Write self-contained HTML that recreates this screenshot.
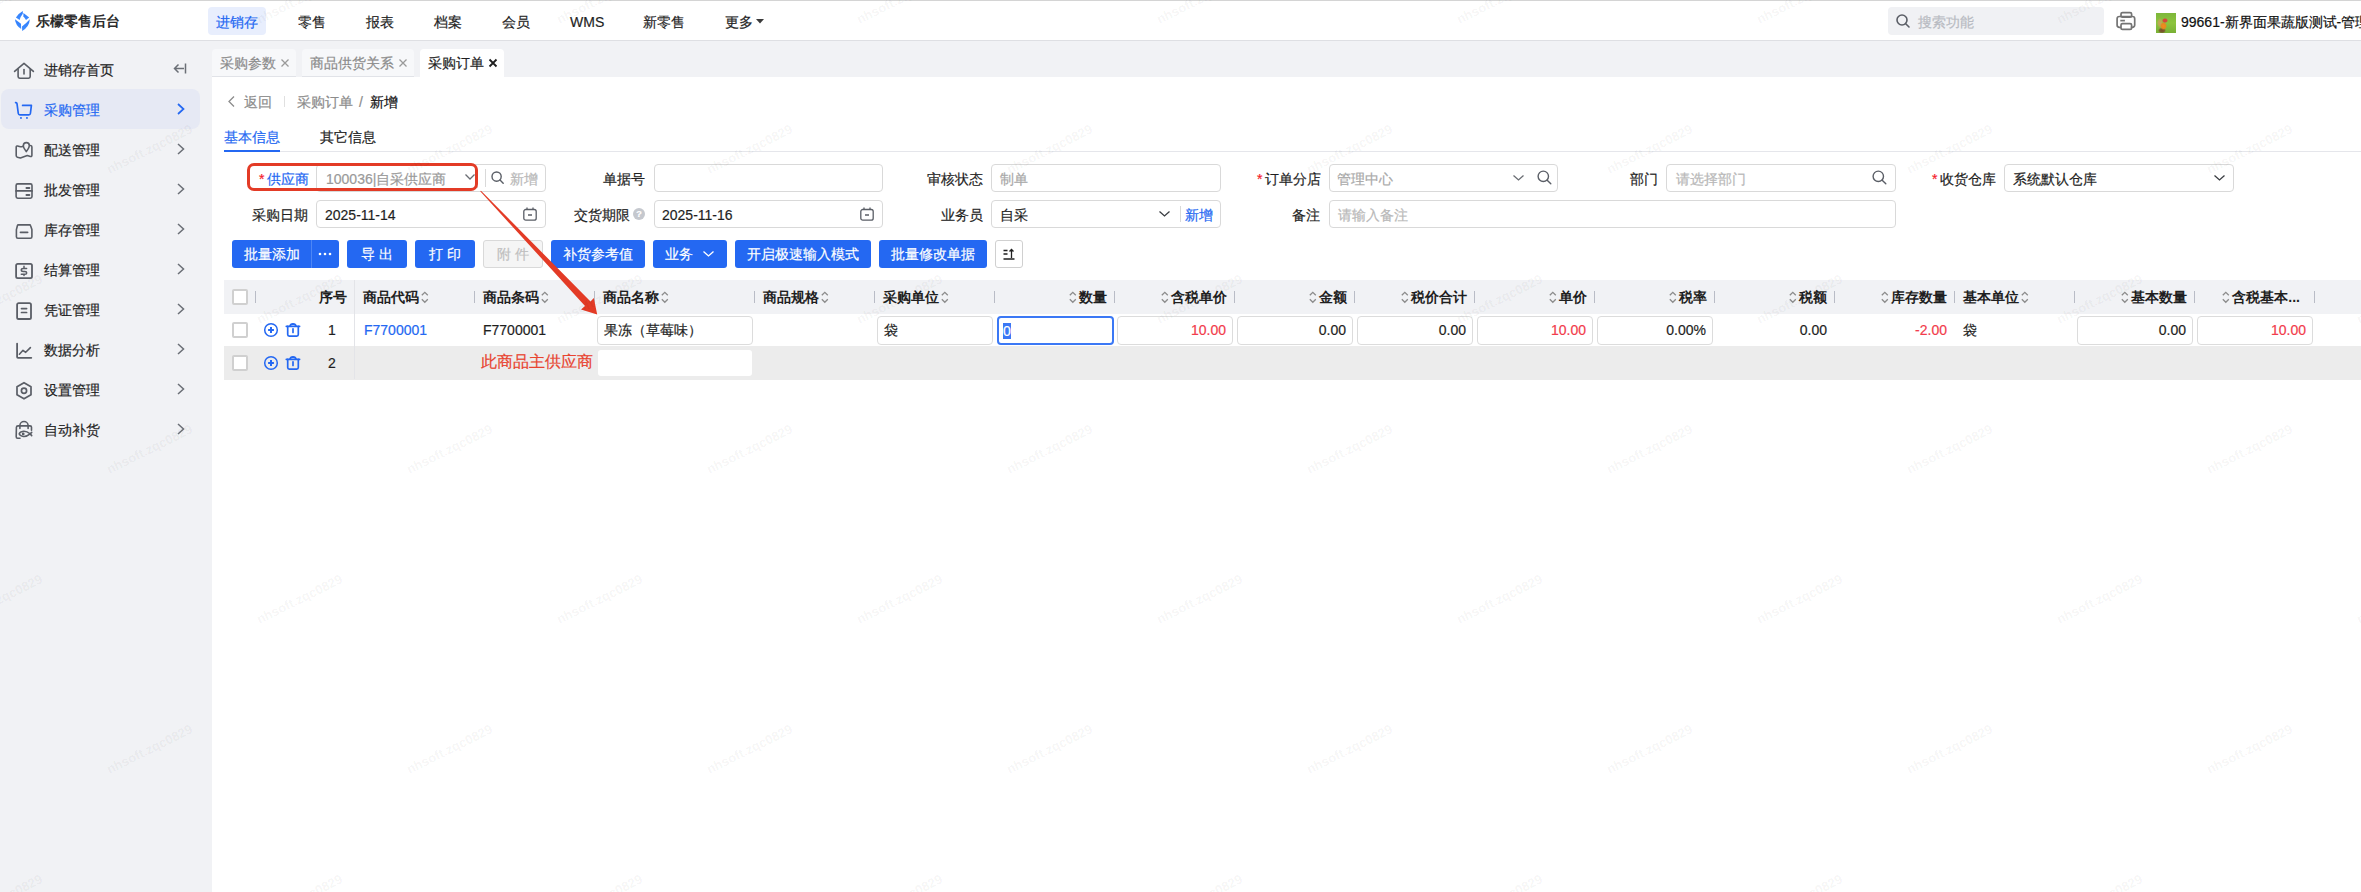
<!DOCTYPE html>
<html><head><meta charset="utf-8">
<style>
*{box-sizing:border-box;margin:0;padding:0}
html,body{width:2361px;height:892px;overflow:hidden;background:#fff}
body{position:relative;font-family:"Liberation Sans",sans-serif;font-size:14px;color:#1f1f1f;-webkit-text-stroke-width:0.2px}
.a{position:absolute}
.t{position:absolute;white-space:nowrap;line-height:20px;height:20px}
svg{position:absolute;overflow:visible}
#topline{left:0;top:0;width:2361px;height:1px;background:#d4d4d4}
#top{left:0;top:1px;width:2361px;height:39px;background:#fff}
#topb{left:0;top:40px;width:2361px;height:1px;background:#dedfe3}
#side{left:0;top:41px;width:212px;height:851px;background:#f1f2f5}
#tabbar{left:212px;top:41px;width:2149px;height:36px;background:#f1f2f5}
.nav{color:#1f1f1f;top:12px}
.sideitem{left:44px;color:#1f1f1f}
.ico{stroke:#5a5e66;fill:none;stroke-width:1.6;stroke-linecap:round;stroke-linejoin:round}
.chev{stroke:#6b6f76;fill:none;stroke-width:1.5}
.tab{top:49px;height:28px;background:#f7f8fa;border-radius:4px 4px 0 0;border-bottom:1px solid #e1e3e8}
.tabt{top:53px;color:#8c8c8c}
.inp{position:absolute;height:28px;border:1px solid #d9d9d9;border-radius:4px;background:#fff}
.lbl{top:169px}
.btn{position:absolute;top:240px;height:28px;background:#2468f2;border-radius:3px;color:#fff;line-height:28px;text-align:center}
.th{top:287px;font-weight:bold;color:#1f1f1f}
.sep{position:absolute;width:1px;height:12px;background:#b9bcc6}
.cb{position:absolute;width:16px;height:16px;border:2px solid #d0d0d0;border-radius:2px;background:#fff}
.cin{position:absolute;height:29px;border:1px solid #dcdcdc;border-radius:4px;background:#fff}
.red{color:#f23c4c}
.r{text-align:right}
.hc{position:absolute;top:281px;height:34px;display:flex;align-items:center;font-weight:bold;-webkit-text-stroke-width:0;white-space:nowrap;color:#1f1f1f}
.hc.r{justify-content:flex-end}
.srt{display:inline-block;width:8px;height:12px;margin:0 2px;position:relative}
.srt svg{position:absolute;left:0;top:0}
.cin{line-height:26px;white-space:nowrap}
</style></head><body>
<div id="topline" class="a"></div>
<div id="top" class="a"></div>
<div id="topb" class="a"></div>
<div id="side" class="a"></div>
<div id="tabbar" class="a"></div>
<div class="a" style="left:212px;top:77px;width:2149px;height:815px;background:#fff"></div>

<!-- logo -->
<svg style="left:0;top:0" width="40" height="40" viewBox="0 0 40 40">
 <defs><linearGradient id="lg" x1="0" y1="0" x2="0" y2="1"><stop offset="0" stop-color="#2f7dfb"/><stop offset="1" stop-color="#3f8dff"/></linearGradient></defs>
 <path d="M22.8 10.9 Q18 13.6 15.9 17.6 L19.6 20 Q20.8 16.2 22.8 13.8Z" fill="url(#lg)"/>
 <path d="M23.4 13 L29.2 17.6 L26 20 L23.4 16.2Z" fill="url(#lg)"/>
 <path d="M15 19.2 L21 23.8 L21.2 29 Q15.5 25.5 15 19.2Z" fill="url(#lg)"/>
 <path d="M29.8 19.2 Q29.5 26.5 22.2 30.9 L22 26.5 Q26 23.5 29.8 19.2Z" fill="url(#lg)"/>
</svg>
<div class="t" style="left:36px;top:11px;font-weight:bold;color:#2b2b2b;font-size:14px;-webkit-text-stroke-width:0">乐檬零售后台</div>

<!-- top nav -->
<div class="a" style="left:208px;top:7px;width:58px;height:28px;background:#e8eefd;border-radius:4px"></div>
<div class="t nav" style="left:216px;color:#2468f2">进销存</div>
<div class="t nav" style="left:298px">零售</div>
<div class="t nav" style="left:366px">报表</div>
<div class="t nav" style="left:434px">档案</div>
<div class="t nav" style="left:502px">会员</div>
<div class="t nav" style="left:570px">WMS</div>
<div class="t nav" style="left:643px">新零售</div>
<div class="t nav" style="left:725px">更多</div>
<svg style="left:756px;top:19px" width="8" height="5"><path d="M0 0H8L4 4.5Z" fill="#3a3a3a"/></svg>

<!-- search -->
<div class="a" style="left:1888px;top:7px;width:216px;height:28px;background:#f0f1f4;border-radius:4px"></div>
<svg style="left:1896px;top:14px" width="14" height="14" viewBox="0 0 14 14"><circle cx="6" cy="6" r="5" fill="none" stroke="#5a5e66" stroke-width="1.6"/><path d="M9.7 9.7L13 13" stroke="#5a5e66" stroke-width="1.6" stroke-linecap="round"/></svg>
<div class="t" style="left:1918px;top:12px;color:#b8bbc2">搜索功能</div>
<svg style="left:2110px;top:5px" width="32" height="32" viewBox="2110 5 32 32"><g fill="none" stroke="#747474" stroke-width="1.7"><rect x="2121" y="12.6" width="10.6" height="4.6" rx="1.5"/><path d="M2121 27.3h-1.6a2.3 2.3 0 0 1-2.3-2.3v-6.2a2.3 2.3 0 0 1 2.3-2.3h13a2.3 2.3 0 0 1 2.3 2.3v6.2a2.3 2.3 0 0 1-2.3 2.3h-1.6"/><rect x="2121" y="23.6" width="10.6" height="5.8" rx="1.5"/><path d="M2120.3 20.6h4.6"/></g></svg>
<div class="a" style="left:2156px;top:13px;width:20px;height:20px;background:radial-gradient(ellipse 3px 2.5px at 9px 7.5px,#d8443a 0,#d8443a 60%,rgba(216,68,58,0) 100%),radial-gradient(ellipse 3.5px 4px at 7.5px 13px,#f0901c 0,#e8871f 60%,rgba(232,135,31,0) 100%),radial-gradient(ellipse 4px 3px at 6px 17.5px,#7a4a2a 0,rgba(122,74,42,0.8) 60%,rgba(122,74,42,0) 100%),radial-gradient(ellipse 3px 5px at 4px 10px,#c9a25a 0,rgba(201,162,90,0.7) 60%,rgba(201,162,90,0) 100%),linear-gradient(180deg,#7db73a,#8cc43e 50%,#79b035)"></div>
<div class="t" style="left:2181px;top:12px;color:#111">99661-新界面果蔬版测试-管理员</div>

<!-- sidebar -->
<div class="a" style="left:1px;top:89px;width:199px;height:40px;background:#e6e9f4;border-radius:8px"></div>
<div class="t sideitem" style="top:60px">进销存首页</div>
<div class="t sideitem" style="top:100px;color:#2468f2">采购管理</div>
<div class="t sideitem" style="top:140px">配送管理</div>
<div class="t sideitem" style="top:180px">批发管理</div>
<div class="t sideitem" style="top:220px">库存管理</div>
<div class="t sideitem" style="top:260px">结算管理</div>
<div class="t sideitem" style="top:300px">凭证管理</div>
<div class="t sideitem" style="top:340px">数据分析</div>
<div class="t sideitem" style="top:380px">设置管理</div>
<div class="t sideitem" style="top:420px">自动补货</div>
<!-- sidebar icons -->
<svg style="left:10px;top:55px" width="30" height="30" viewBox="0 0 30 30" class="ico"><path d="M4.6 16.4L14 8.4l9.4 8"/><path d="M8.1 14.2V21.6Q8.1 23.2 9.7 23.2H18.6Q20.2 23.2 20.2 21.6V14.2"/><path d="M14 14.6V19"/></svg>
<svg style="left:173px;top:63px" width="14" height="11" viewBox="0 0 14 11" class="chev"><path d="M12.5 0.5V10.5M11 5.5H1.5M5.5 1.5L1.5 5.5L5.5 9.5"/></svg>
<svg style="left:10px;top:95px" width="30" height="30" viewBox="0 0 30 30" class="ico"><path d="M5.6 7.6Q6.8 7.4 7 8.6L8.3 18.5Q8.5 19.9 9.9 19.9H18.9Q20.2 19.9 20.4 18.5L21.4 10.4H12.6" stroke="#2468f2" stroke-width="1.7"/><rect x="10.1" y="22.1" width="1.7" height="1.7" fill="#2468f2" stroke="none"/><rect x="16.1" y="22.1" width="1.7" height="1.7" fill="#2468f2" stroke="none"/></svg>
<svg style="left:10px;top:135px" width="30" height="30" viewBox="0 0 30 30" class="ico"><path d="M13 11.2Q11.6 11.9 10.4 11.8L7.6 11Q6.2 10.7 6.2 12.1V20.6Q6.2 21.8 7.4 22.2L10.4 23L17.3 20.5L20.4 21.4Q21.9 21.8 21.9 20.3V12.1Q21.9 10.8 20.6 10.5"/><path d="M16.3 16.6L14.3 13.6Q13.3 12.1 13.4 10.6A2.95 2.95 0 0 1 19.3 10.6Q19.3 12.1 18.3 13.6Z"/></svg>
<svg style="left:10px;top:175px" width="30" height="30" viewBox="0 0 30 30" class="ico"><rect x="6.1" y="8.9" width="15.9" height="14.3" rx="1.6"/><path d="M6.1 15.9H22M16.4 13H19.4M16.4 20H19.4" stroke-width="1.8"/></svg>
<svg style="left:10px;top:215px" width="30" height="30" viewBox="0 0 30 30" class="ico"><path d="M8.4 9.9H19.6Q20.4 9.9 20.6 10.7L21.9 14.6V21.7Q21.9 23.2 20.4 23.2H7.9Q6.4 23.2 6.4 21.7V14.6L7.4 10.7Q7.6 9.9 8.4 9.9Z"/><path d="M10.5 17.3H17.6" stroke-width="1.8"/></svg>
<svg style="left:10px;top:255px" width="30" height="30" viewBox="0 0 30 30" class="ico"><rect x="6.1" y="8.9" width="15.9" height="14.3" rx="1.6" stroke-width="1.8"/><path d="M16.6 13.4H13.2Q11.3 13.4 11.3 14.9Q11.3 16.4 13.2 16.4H14.9Q16.7 16.4 16.7 17.9Q16.7 19.3 14.9 19.3H11.3M14 11.3V13.4M14 19.3V20.6" stroke-width="1.5"/></svg>
<svg style="left:10px;top:295px" width="30" height="30" viewBox="0 0 30 30" class="ico"><rect x="7.1" y="8.1" width="13.9" height="15.9" rx="1.6" stroke-width="1.8"/><path d="M11.5 13.6H16.6M11.5 17.5H16.6" stroke-width="1.7"/></svg>
<svg style="left:10px;top:335px" width="30" height="30" viewBox="0 0 30 30" class="ico"><path d="M7.1 8.6V22Q7.1 22.8 7.9 22.8H21.3" stroke-width="1.8"/><path d="M9.4 19.2L13 15.3L15.7 17.3L20.4 12.6"/></svg>
<svg style="left:10px;top:375px" width="30" height="30" viewBox="0 0 30 30" class="ico"><path d="M14 7.7L21 11.7V19.8L14 23.8L7 19.8V11.7Z" stroke-width="1.7"/><circle cx="14" cy="15.8" r="2.6" stroke-width="1.7"/></svg>
<svg style="left:10px;top:415px" width="30" height="30" viewBox="0 0 30 30" class="ico"><path d="M9.9 13.5V10.6a4.1 4.1 0 0 1 8.2 0V13.5"/><path d="M10 23.2H7.6Q6.2 23.2 6.2 21.8L6.4 12.3Q6.5 10.9 8 10.9H20Q21.5 10.9 21.5 12.3V15.2"/><path d="M20.2 18.9Q16.5 16 13.5 16.3Q9.8 16.8 9.2 18.9Q9.8 21 13.5 21.5Q16.5 21.8 20.2 18.9ZM20.2 18.9L21.7 17.4M20.2 18.9L21.7 20.6"/><circle cx="13.2" cy="18.9" r="0.6" fill="#5a5e66"/></svg>
<!-- chevrons -->
<svg style="left:177px;top:103px" width="8" height="12" viewBox="0 0 8 12" class="chev"><path d="M1 1l5.5 5L1 11" stroke="#2468f2" stroke-width="1.7"/></svg>
<svg style="left:177px;top:143px" width="8" height="12" viewBox="0 0 8 12" class="chev"><path d="M1 1l5.5 5L1 11"/></svg>
<svg style="left:177px;top:183px" width="8" height="12" viewBox="0 0 8 12" class="chev"><path d="M1 1l5.5 5L1 11"/></svg>
<svg style="left:177px;top:223px" width="8" height="12" viewBox="0 0 8 12" class="chev"><path d="M1 1l5.5 5L1 11"/></svg>
<svg style="left:177px;top:263px" width="8" height="12" viewBox="0 0 8 12" class="chev"><path d="M1 1l5.5 5L1 11"/></svg>
<svg style="left:177px;top:303px" width="8" height="12" viewBox="0 0 8 12" class="chev"><path d="M1 1l5.5 5L1 11"/></svg>
<svg style="left:177px;top:343px" width="8" height="12" viewBox="0 0 8 12" class="chev"><path d="M1 1l5.5 5L1 11"/></svg>
<svg style="left:177px;top:383px" width="8" height="12" viewBox="0 0 8 12" class="chev"><path d="M1 1l5.5 5L1 11"/></svg>
<svg style="left:177px;top:423px" width="8" height="12" viewBox="0 0 8 12" class="chev"><path d="M1 1l5.5 5L1 11"/></svg>

<!-- tabs -->
<div class="a tab" style="left:212px;width:84px"></div>
<div class="a tab" style="left:302px;width:112px"></div>
<div class="a" style="left:420px;top:49px;width:84px;height:28px;background:#fff;border-radius:4px 4px 0 0"></div>
<div class="t tabt" style="left:220px">采购参数</div>
<div class="t tabt" style="left:310px">商品供货关系</div>
<div class="t" style="left:428px;top:53px;color:#1f1f1f">采购订单</div>
<svg style="left:281px;top:59px" width="8" height="8" viewBox="0 0 8 8"><path d="M0.5 0.5l7 7M7.5 0.5l-7 7" stroke="#9a9a9a" stroke-width="1.3"/></svg>
<svg style="left:399px;top:59px" width="8" height="8" viewBox="0 0 8 8"><path d="M0.5 0.5l7 7M7.5 0.5l-7 7" stroke="#9a9a9a" stroke-width="1.3"/></svg>
<svg style="left:489px;top:59px" width="8" height="8" viewBox="0 0 8 8"><path d="M0.5 0.5l7 7M7.5 0.5l-7 7" stroke="#1f1f1f" stroke-width="1.8"/></svg>

<!-- breadcrumb -->
<svg style="left:228px;top:96px" width="7" height="11" viewBox="0 0 7 11"><path d="M6 0.5L1 5.5l5 5" fill="none" stroke="#8c8c8c" stroke-width="1.3"/></svg>
<div class="t" style="left:244px;top:92px;color:#8c8c8c">返回</div>
<div class="a" style="left:284px;top:96px;width:1px;height:11px;background:#e0e0e0"></div>
<div class="t" style="left:297px;top:92px;color:#8c8c8c">采购订单</div>
<div class="t" style="left:359px;top:92px;color:#8c8c8c">/</div>
<div class="t" style="left:370px;top:92px;color:#111">新增</div>

<!-- sub tabs -->
<div class="t" style="left:224px;top:127px;color:#2468f2">基本信息</div>
<div class="t" style="left:320px;top:127px;color:#1f1f1f">其它信息</div>
<div class="a" style="left:224px;top:151px;width:2137px;height:1px;background:#e5e6eb"></div>
<div class="a" style="left:224px;top:150px;width:56px;height:2px;background:#2468f2"></div>

<!-- form row 1 -->
<div class="inp" style="left:316px;top:164px;width:230px"></div>
<div class="a" style="left:477px;top:168px;width:1px;height:20px;background:#e0e0e0"></div>
<div class="t lbl" style="left:259px;color:#f5222d">*</div>
<div class="t lbl" style="left:267px;color:#2468f2">供应商</div>
<div class="a" style="left:316px;top:168px;width:1px;height:20px;background:#d9d9d9"></div>
<div class="t lbl" style="left:326px;color:#9a9a9a">100036|自采供应商</div>
<svg style="left:465px;top:174px" width="10" height="6" viewBox="0 0 10 6"><path d="M0.5 0.5L5 5l4.5-4.5" fill="none" stroke="#6a6d73" stroke-width="1.3"/></svg>
<div class="a" style="left:485px;top:169px;width:1px;height:18px;background:#d9d9d9"></div>
<svg style="left:491px;top:171px" width="13" height="13" viewBox="0 0 13 13"><circle cx="5.6" cy="5.6" r="4.6" fill="none" stroke="#5a5e66" stroke-width="1.4"/><path d="M9 9l3.2 3.2" stroke="#5a5e66" stroke-width="1.4" stroke-linecap="round"/></svg>
<div class="t lbl" style="left:510px;color:#b8b8b8">新增</div>

<div class="t lbl" style="left:603px">单据号</div>
<div class="inp" style="left:654px;top:164px;width:229px"></div>
<div class="t lbl" style="left:927px">审核状态</div>
<div class="inp" style="left:991px;top:164px;width:230px"></div>
<div class="t lbl" style="left:1000px;color:#a8a8a8">制单</div>
<div class="t lbl" style="left:1257px;color:#f5222d">*</div>
<div class="t lbl" style="left:1265px">订单分店</div>
<div class="inp" style="left:1329px;top:164px;width:229px"></div>
<div class="t lbl" style="left:1337px;color:#a8a8a8">管理中心</div>
<svg style="left:1513px;top:175px" width="11" height="6" viewBox="0 0 11 6"><path d="M0.5 0.5L5.5 5l5-4.5" fill="none" stroke="#6a6d73" stroke-width="1.3"/></svg>
<svg style="left:1537px;top:170px" width="15" height="15" viewBox="0 0 15 15"><circle cx="6.3" cy="6.3" r="5.2" fill="none" stroke="#5a5e66" stroke-width="1.4"/><path d="M10.2 10.2l3.6 3.6" stroke="#5a5e66" stroke-width="1.4" stroke-linecap="round"/></svg>
<div class="t lbl" style="left:1630px">部门</div>
<div class="inp" style="left:1666px;top:164px;width:230px"></div>
<div class="t lbl" style="left:1676px;color:#b8b8b8">请选择部门</div>
<svg style="left:1872px;top:170px" width="15" height="15" viewBox="0 0 15 15"><circle cx="6.3" cy="6.3" r="5.2" fill="none" stroke="#5a5e66" stroke-width="1.4"/><path d="M10.2 10.2l3.6 3.6" stroke="#5a5e66" stroke-width="1.4" stroke-linecap="round"/></svg>
<div class="t lbl" style="left:1932px;color:#f5222d">*</div>
<div class="t lbl" style="left:1940px">收货仓库</div>
<div class="inp" style="left:2004px;top:164px;width:230px"></div>
<div class="t lbl" style="left:2013px">系统默认仓库</div>
<svg style="left:2214px;top:175px" width="11" height="6" viewBox="0 0 11 6"><path d="M0.5 0.5L5.5 5l5-4.5" fill="none" stroke="#3a3d42" stroke-width="1.3"/></svg>

<!-- form row 2 -->
<div class="t" style="left:252px;top:205px">采购日期</div>
<div class="inp" style="left:316px;top:200px;width:230px"></div>
<div class="t" style="left:325px;top:205px">2025-11-14</div>
<svg style="left:523px;top:207px" width="14" height="14" viewBox="0 0 14 14"><rect x="0.8" y="2.5" width="12.4" height="10.7" rx="2" fill="none" stroke="#5a5e66" stroke-width="1.3"/><path d="M4 0.5v2.5M10 0.5v2.5M5 8h4" stroke="#5a5e66" stroke-width="1.3"/></svg>
<div class="t" style="left:574px;top:205px">交货期限</div>
<div class="a" style="left:633px;top:208px;width:12px;height:12px;border-radius:6px;background:#c5c8ce;color:#fff;font-size:9px;line-height:12px;text-align:center;font-weight:bold">?</div>
<div class="inp" style="left:654px;top:200px;width:229px"></div>
<div class="t" style="left:662px;top:205px">2025-11-16</div>
<svg style="left:860px;top:207px" width="14" height="14" viewBox="0 0 14 14"><rect x="0.8" y="2.5" width="12.4" height="10.7" rx="2" fill="none" stroke="#5a5e66" stroke-width="1.3"/><path d="M4 0.5v2.5M10 0.5v2.5M5 8h4" stroke="#5a5e66" stroke-width="1.3"/></svg>
<div class="t" style="left:941px;top:205px">业务员</div>
<div class="inp" style="left:991px;top:200px;width:230px"></div>
<div class="t" style="left:1000px;top:205px">自采</div>
<svg style="left:1159px;top:211px" width="11" height="6" viewBox="0 0 11 6"><path d="M0.5 0.5L5.5 5l5-4.5" fill="none" stroke="#3a3d42" stroke-width="1.3"/></svg>
<div class="a" style="left:1180px;top:206px;width:1px;height:16px;background:#d9d9d9"></div>
<div class="t" style="left:1185px;top:205px;color:#2468f2">新增</div>
<div class="t" style="left:1292px;top:205px">备注</div>
<div class="inp" style="left:1329px;top:200px;width:567px"></div>
<div class="t" style="left:1338px;top:205px;color:#b8b8b8">请输入备注</div>

<!-- buttons -->
<div class="btn" style="left:232px;width:79px;border-radius:3px 0 0 3px">批量添加</div>
<div class="btn" style="left:311px;width:28px;border-left:1px solid #4d86f5;border-radius:0 3px 3px 0"></div><svg style="left:318px;top:252px" width="14" height="4" viewBox="0 0 14 4"><circle cx="2" cy="2" r="1.3" fill="#fff"/><circle cx="7" cy="2" r="1.3" fill="#fff"/><circle cx="12" cy="2" r="1.3" fill="#fff"/></svg>
<div class="btn" style="left:347px;width:60px;letter-spacing:4px;text-indent:4px">导出</div>
<div class="btn" style="left:415px;width:60px;letter-spacing:4px;text-indent:4px">打印</div>
<div class="btn" style="left:483px;width:60px;letter-spacing:4px;text-indent:4px;background:#f5f5f5;border:1px solid #d9d9d9;color:#c0c0c0;line-height:26px">附件</div>
<div class="btn" style="left:551px;width:94px">补货参考值</div>
<div class="btn" style="left:653px;width:74px;text-align:left;padding-left:12px">业务</div>
<svg style="left:703px;top:251px" width="11" height="6" viewBox="0 0 11 6"><path d="M0.5 0.5L5.5 5l5-4.5" fill="none" stroke="#fff" stroke-width="1.3"/></svg>
<div class="btn" style="left:735px;width:136px">开启极速输入模式</div>
<div class="btn" style="left:879px;width:108px">批量修改单据</div>
<div class="a" style="left:995px;top:240px;width:28px;height:28px;border:1px solid #d0d0d0;border-radius:3px;background:#fff"></div>
<svg style="left:1003px;top:248px" width="12" height="12" viewBox="0 0 12 12"><path d="M0.5 2.5h4M0.5 6h4M0.5 11h11M8.5 10V1.5M6.5 3.5l2-2 2 2" fill="none" stroke="#1f1f1f" stroke-width="1.3"/></svg>

<!-- table -->
<div class="a" style="left:224px;top:280px;width:2137px;height:34px;background:#f1f2f5"></div>
<div class="a" style="left:224px;top:314px;width:2137px;height:32px;background:#fff"></div>
<div class="a" style="left:224px;top:346px;width:2137px;height:34px;background:#ececec"></div>
<div class="a" style="left:354px;top:280px;width:1px;height:99px;background:#e3e4e8"></div>
<!-- table header -->
<div class="cb" style="left:232px;top:289px"></div>
<div class="sep" style="left:255px;top:291px"></div>
<div class="hc r" style="left:300px;width:47px">序号</div>
<div class="sep" style="left:474px;top:291px"></div>
<div class="hc" style="left:355px;width:119px;justify-content:flex-start;padding-left:8px">商品代码<i class="srt"><svg width="8" height="12" viewBox="0 0 8 12"><path d="M0.8 3.3L3.8 0.3L6.8 3.3M0.8 7.3L3.8 10.3L6.8 7.3" fill="none" stroke="#8c8c8c" stroke-width="1.3"/></svg></i></div>
<div class="sep" style="left:594px;top:291px"></div>
<div class="hc" style="left:475px;width:119px;justify-content:flex-start;padding-left:8px">商品条码<i class="srt"><svg width="8" height="12" viewBox="0 0 8 12"><path d="M0.8 3.3L3.8 0.3L6.8 3.3M0.8 7.3L3.8 10.3L6.8 7.3" fill="none" stroke="#8c8c8c" stroke-width="1.3"/></svg></i></div>
<div class="sep" style="left:754px;top:291px"></div>
<div class="hc" style="left:595px;width:159px;justify-content:flex-start;padding-left:8px">商品名称<i class="srt"><svg width="8" height="12" viewBox="0 0 8 12"><path d="M0.8 3.3L3.8 0.3L6.8 3.3M0.8 7.3L3.8 10.3L6.8 7.3" fill="none" stroke="#8c8c8c" stroke-width="1.3"/></svg></i></div>
<div class="sep" style="left:874px;top:291px"></div>
<div class="hc" style="left:755px;width:119px;justify-content:flex-start;padding-left:8px">商品规格<i class="srt"><svg width="8" height="12" viewBox="0 0 8 12"><path d="M0.8 3.3L3.8 0.3L6.8 3.3M0.8 7.3L3.8 10.3L6.8 7.3" fill="none" stroke="#8c8c8c" stroke-width="1.3"/></svg></i></div>
<div class="sep" style="left:994px;top:291px"></div>
<div class="hc" style="left:875px;width:119px;justify-content:flex-start;padding-left:8px">采购单位<i class="srt"><svg width="8" height="12" viewBox="0 0 8 12"><path d="M0.8 3.3L3.8 0.3L6.8 3.3M0.8 7.3L3.8 10.3L6.8 7.3" fill="none" stroke="#8c8c8c" stroke-width="1.3"/></svg></i></div>
<div class="sep" style="left:1114px;top:291px"></div>
<div class="hc" style="left:995px;width:119px;justify-content:flex-end;padding-right:7px"><i class="srt"><svg width="8" height="12" viewBox="0 0 8 12"><path d="M0.8 3.3L3.8 0.3L6.8 3.3M0.8 7.3L3.8 10.3L6.8 7.3" fill="none" stroke="#8c8c8c" stroke-width="1.3"/></svg></i>数量</div>
<div class="sep" style="left:1234px;top:291px"></div>
<div class="hc" style="left:1115px;width:119px;justify-content:flex-end;padding-right:7px"><i class="srt"><svg width="8" height="12" viewBox="0 0 8 12"><path d="M0.8 3.3L3.8 0.3L6.8 3.3M0.8 7.3L3.8 10.3L6.8 7.3" fill="none" stroke="#8c8c8c" stroke-width="1.3"/></svg></i>含税单价</div>
<div class="sep" style="left:1354px;top:291px"></div>
<div class="hc" style="left:1235px;width:119px;justify-content:flex-end;padding-right:7px"><i class="srt"><svg width="8" height="12" viewBox="0 0 8 12"><path d="M0.8 3.3L3.8 0.3L6.8 3.3M0.8 7.3L3.8 10.3L6.8 7.3" fill="none" stroke="#8c8c8c" stroke-width="1.3"/></svg></i>金额</div>
<div class="sep" style="left:1474px;top:291px"></div>
<div class="hc" style="left:1355px;width:119px;justify-content:flex-end;padding-right:7px"><i class="srt"><svg width="8" height="12" viewBox="0 0 8 12"><path d="M0.8 3.3L3.8 0.3L6.8 3.3M0.8 7.3L3.8 10.3L6.8 7.3" fill="none" stroke="#8c8c8c" stroke-width="1.3"/></svg></i>税价合计</div>
<div class="sep" style="left:1594px;top:291px"></div>
<div class="hc" style="left:1475px;width:119px;justify-content:flex-end;padding-right:7px"><i class="srt"><svg width="8" height="12" viewBox="0 0 8 12"><path d="M0.8 3.3L3.8 0.3L6.8 3.3M0.8 7.3L3.8 10.3L6.8 7.3" fill="none" stroke="#8c8c8c" stroke-width="1.3"/></svg></i>单价</div>
<div class="sep" style="left:1714px;top:291px"></div>
<div class="hc" style="left:1595px;width:119px;justify-content:flex-end;padding-right:7px"><i class="srt"><svg width="8" height="12" viewBox="0 0 8 12"><path d="M0.8 3.3L3.8 0.3L6.8 3.3M0.8 7.3L3.8 10.3L6.8 7.3" fill="none" stroke="#8c8c8c" stroke-width="1.3"/></svg></i>税率</div>
<div class="sep" style="left:1834px;top:291px"></div>
<div class="hc" style="left:1715px;width:119px;justify-content:flex-end;padding-right:7px"><i class="srt"><svg width="8" height="12" viewBox="0 0 8 12"><path d="M0.8 3.3L3.8 0.3L6.8 3.3M0.8 7.3L3.8 10.3L6.8 7.3" fill="none" stroke="#8c8c8c" stroke-width="1.3"/></svg></i>税额</div>
<div class="sep" style="left:1954px;top:291px"></div>
<div class="hc" style="left:1835px;width:119px;justify-content:flex-end;padding-right:7px"><i class="srt"><svg width="8" height="12" viewBox="0 0 8 12"><path d="M0.8 3.3L3.8 0.3L6.8 3.3M0.8 7.3L3.8 10.3L6.8 7.3" fill="none" stroke="#8c8c8c" stroke-width="1.3"/></svg></i>库存数量</div>
<div class="sep" style="left:2074px;top:291px"></div>
<div class="hc" style="left:1955px;width:119px;justify-content:flex-start;padding-left:8px">基本单位<i class="srt"><svg width="8" height="12" viewBox="0 0 8 12"><path d="M0.8 3.3L3.8 0.3L6.8 3.3M0.8 7.3L3.8 10.3L6.8 7.3" fill="none" stroke="#8c8c8c" stroke-width="1.3"/></svg></i></div>
<div class="sep" style="left:2194px;top:291px"></div>
<div class="hc" style="left:2075px;width:119px;justify-content:flex-end;padding-right:7px"><i class="srt"><svg width="8" height="12" viewBox="0 0 8 12"><path d="M0.8 3.3L3.8 0.3L6.8 3.3M0.8 7.3L3.8 10.3L6.8 7.3" fill="none" stroke="#8c8c8c" stroke-width="1.3"/></svg></i>基本数量</div>
<div class="sep" style="left:2314px;top:291px"></div>
<div class="hc" style="left:2195px;width:119px;justify-content:flex-end;padding-right:14px"><i class="srt"><svg width="8" height="12" viewBox="0 0 8 12"><path d="M0.8 3.3L3.8 0.3L6.8 3.3M0.8 7.3L3.8 10.3L6.8 7.3" fill="none" stroke="#8c8c8c" stroke-width="1.3"/></svg></i>含税基本...</div>
<!-- row1 -->
<div class="cb" style="left:232px;top:322px"></div>
<div class="cb" style="left:232px;top:355px"></div>
<div class="t" style="left:328px;top:320px">1</div>
<div class="t" style="left:328px;top:353px">2</div>
<div class="t" style="left:364px;top:320px;color:#2468f2">F7700001</div>
<div class="t" style="left:483px;top:320px">F7700001</div>
<div class="t" style="left:481px;top:351px;color:#e8432f;font-size:16px;line-height:22px;height:22px">此商品主供应商</div>
<div class="cin " style="left:597px;top:316px;width:156px;padding-left:6px">果冻（草莓味）</div>
<div class="cin " style="left:877px;top:316px;width:116px;padding-left:6px">袋</div>
<div class="cin" style="left:997px;top:316px;width:117px;border:2px solid #3b78f5;padding-left:4px"><span style="background:#3b78f5;color:#fff;line-height:16px;display:inline-block;margin-top:4px">0</span></div>
<div class="cin red" style="left:1117px;top:316px;width:116px;padding-right:6px;text-align:right">10.00</div>
<div class="cin " style="left:1237px;top:316px;width:116px;padding-right:6px;text-align:right">0.00</div>
<div class="cin " style="left:1357px;top:316px;width:116px;padding-right:6px;text-align:right">0.00</div>
<div class="cin red" style="left:1477px;top:316px;width:116px;padding-right:6px;text-align:right">10.00</div>
<div class="cin " style="left:1597px;top:316px;width:116px;padding-right:6px;text-align:right">0.00%</div>
<div class="t r" style="left:1720px;top:320px;width:107px">0.00</div>
<div class="t r red" style="left:1840px;top:320px;width:107px">-2.00</div>
<div class="t" style="left:1963px;top:320px">袋</div>
<div class="cin " style="left:2077px;top:316px;width:116px;padding-right:6px;text-align:right">0.00</div>
<div class="cin red" style="left:2197px;top:316px;width:116px;padding-right:6px;text-align:right">10.00</div>
<div class="a" style="left:598px;top:350px;width:154px;height:26px;background:#fff;border-radius:3px"></div>
<svg style="left:262px;top:321px" width="18" height="18" viewBox="0 0 18 18"><circle cx="9" cy="9" r="6.3" fill="none" stroke="#2468f2" stroke-width="1.5"/><path d="M6.1 9H11.9M9 6.1V11.9" stroke="#2468f2" stroke-width="2"/></svg>
<svg style="left:284px;top:316px" width="18" height="24" viewBox="0 0 18 24"><g fill="none" stroke="#2468f2" stroke-width="1.7" stroke-linecap="round"><path d="M2.3 10.3H15.6"/><path d="M6 10Q6.4 8.1 9 7.9Q11.6 8.1 12 10"/><path d="M3.7 10.3V18.6Q3.7 20.1 5.2 20.1H12.8Q14.3 20.1 14.3 18.6V10.3"/><path d="M9 12.8V16.5"/></g></svg>
<svg style="left:262px;top:354px" width="18" height="18" viewBox="0 0 18 18"><circle cx="9" cy="9" r="6.3" fill="none" stroke="#2468f2" stroke-width="1.5"/><path d="M6.1 9H11.9M9 6.1V11.9" stroke="#2468f2" stroke-width="2"/></svg>
<svg style="left:284px;top:349px" width="18" height="24" viewBox="0 0 18 24"><g fill="none" stroke="#2468f2" stroke-width="1.7" stroke-linecap="round"><path d="M2.3 10.3H15.6"/><path d="M6 10Q6.4 8.1 9 7.9Q11.6 8.1 12 10"/><path d="M3.7 10.3V18.6Q3.7 20.1 5.2 20.1H12.8Q14.3 20.1 14.3 18.6V10.3"/><path d="M9 12.8V16.5"/></g></svg>
<!-- annotation -->
<div class="a" style="left:247px;top:163px;width:231px;height:28px;border:3px solid #e33b26;border-radius:7px"></div>
<svg style="left:0;top:0" width="2361" height="892"><path d="M480.2 191.3L481 190.7L590.5 301.5L593.8 298L597.2 314.5L581 309.5L585 306Z" fill="#e33b26"/></svg>
<!-- watermark -->
<svg style="left:0;top:0;pointer-events:none" width="2361" height="892"><g fill="#000" fill-opacity="0.05" font-family="Liberation Sans" font-weight="bold" font-size="13" text-anchor="middle" dominant-baseline="middle"><text x="-300" y="0" transform="rotate(-26.5 -300 0)">nhsoft.zqc0829</text><text x="0" y="0" transform="rotate(-26.5 0 0)">nhsoft.zqc0829</text><text x="300" y="0" transform="rotate(-26.5 300 0)">nhsoft.zqc0829</text><text x="600" y="0" transform="rotate(-26.5 600 0)">nhsoft.zqc0829</text><text x="900" y="0" transform="rotate(-26.5 900 0)">nhsoft.zqc0829</text><text x="1200" y="0" transform="rotate(-26.5 1200 0)">nhsoft.zqc0829</text><text x="1500" y="0" transform="rotate(-26.5 1500 0)">nhsoft.zqc0829</text><text x="1800" y="0" transform="rotate(-26.5 1800 0)">nhsoft.zqc0829</text><text x="2100" y="0" transform="rotate(-26.5 2100 0)">nhsoft.zqc0829</text><text x="2400" y="0" transform="rotate(-26.5 2400 0)">nhsoft.zqc0829</text><text x="-150" y="150" transform="rotate(-26.5 -150 150)">nhsoft.zqc0829</text><text x="150" y="150" transform="rotate(-26.5 150 150)">nhsoft.zqc0829</text><text x="450" y="150" transform="rotate(-26.5 450 150)">nhsoft.zqc0829</text><text x="750" y="150" transform="rotate(-26.5 750 150)">nhsoft.zqc0829</text><text x="1050" y="150" transform="rotate(-26.5 1050 150)">nhsoft.zqc0829</text><text x="1350" y="150" transform="rotate(-26.5 1350 150)">nhsoft.zqc0829</text><text x="1650" y="150" transform="rotate(-26.5 1650 150)">nhsoft.zqc0829</text><text x="1950" y="150" transform="rotate(-26.5 1950 150)">nhsoft.zqc0829</text><text x="2250" y="150" transform="rotate(-26.5 2250 150)">nhsoft.zqc0829</text><text x="2550" y="150" transform="rotate(-26.5 2550 150)">nhsoft.zqc0829</text><text x="-300" y="300" transform="rotate(-26.5 -300 300)">nhsoft.zqc0829</text><text x="0" y="300" transform="rotate(-26.5 0 300)">nhsoft.zqc0829</text><text x="300" y="300" transform="rotate(-26.5 300 300)">nhsoft.zqc0829</text><text x="600" y="300" transform="rotate(-26.5 600 300)">nhsoft.zqc0829</text><text x="900" y="300" transform="rotate(-26.5 900 300)">nhsoft.zqc0829</text><text x="1200" y="300" transform="rotate(-26.5 1200 300)">nhsoft.zqc0829</text><text x="1500" y="300" transform="rotate(-26.5 1500 300)">nhsoft.zqc0829</text><text x="1800" y="300" transform="rotate(-26.5 1800 300)">nhsoft.zqc0829</text><text x="2100" y="300" transform="rotate(-26.5 2100 300)">nhsoft.zqc0829</text><text x="2400" y="300" transform="rotate(-26.5 2400 300)">nhsoft.zqc0829</text><text x="-150" y="450" transform="rotate(-26.5 -150 450)">nhsoft.zqc0829</text><text x="150" y="450" transform="rotate(-26.5 150 450)">nhsoft.zqc0829</text><text x="450" y="450" transform="rotate(-26.5 450 450)">nhsoft.zqc0829</text><text x="750" y="450" transform="rotate(-26.5 750 450)">nhsoft.zqc0829</text><text x="1050" y="450" transform="rotate(-26.5 1050 450)">nhsoft.zqc0829</text><text x="1350" y="450" transform="rotate(-26.5 1350 450)">nhsoft.zqc0829</text><text x="1650" y="450" transform="rotate(-26.5 1650 450)">nhsoft.zqc0829</text><text x="1950" y="450" transform="rotate(-26.5 1950 450)">nhsoft.zqc0829</text><text x="2250" y="450" transform="rotate(-26.5 2250 450)">nhsoft.zqc0829</text><text x="2550" y="450" transform="rotate(-26.5 2550 450)">nhsoft.zqc0829</text><text x="-300" y="600" transform="rotate(-26.5 -300 600)">nhsoft.zqc0829</text><text x="0" y="600" transform="rotate(-26.5 0 600)">nhsoft.zqc0829</text><text x="300" y="600" transform="rotate(-26.5 300 600)">nhsoft.zqc0829</text><text x="600" y="600" transform="rotate(-26.5 600 600)">nhsoft.zqc0829</text><text x="900" y="600" transform="rotate(-26.5 900 600)">nhsoft.zqc0829</text><text x="1200" y="600" transform="rotate(-26.5 1200 600)">nhsoft.zqc0829</text><text x="1500" y="600" transform="rotate(-26.5 1500 600)">nhsoft.zqc0829</text><text x="1800" y="600" transform="rotate(-26.5 1800 600)">nhsoft.zqc0829</text><text x="2100" y="600" transform="rotate(-26.5 2100 600)">nhsoft.zqc0829</text><text x="2400" y="600" transform="rotate(-26.5 2400 600)">nhsoft.zqc0829</text><text x="-150" y="750" transform="rotate(-26.5 -150 750)">nhsoft.zqc0829</text><text x="150" y="750" transform="rotate(-26.5 150 750)">nhsoft.zqc0829</text><text x="450" y="750" transform="rotate(-26.5 450 750)">nhsoft.zqc0829</text><text x="750" y="750" transform="rotate(-26.5 750 750)">nhsoft.zqc0829</text><text x="1050" y="750" transform="rotate(-26.5 1050 750)">nhsoft.zqc0829</text><text x="1350" y="750" transform="rotate(-26.5 1350 750)">nhsoft.zqc0829</text><text x="1650" y="750" transform="rotate(-26.5 1650 750)">nhsoft.zqc0829</text><text x="1950" y="750" transform="rotate(-26.5 1950 750)">nhsoft.zqc0829</text><text x="2250" y="750" transform="rotate(-26.5 2250 750)">nhsoft.zqc0829</text><text x="2550" y="750" transform="rotate(-26.5 2550 750)">nhsoft.zqc0829</text><text x="-300" y="900" transform="rotate(-26.5 -300 900)">nhsoft.zqc0829</text><text x="0" y="900" transform="rotate(-26.5 0 900)">nhsoft.zqc0829</text><text x="300" y="900" transform="rotate(-26.5 300 900)">nhsoft.zqc0829</text><text x="600" y="900" transform="rotate(-26.5 600 900)">nhsoft.zqc0829</text><text x="900" y="900" transform="rotate(-26.5 900 900)">nhsoft.zqc0829</text><text x="1200" y="900" transform="rotate(-26.5 1200 900)">nhsoft.zqc0829</text><text x="1500" y="900" transform="rotate(-26.5 1500 900)">nhsoft.zqc0829</text><text x="1800" y="900" transform="rotate(-26.5 1800 900)">nhsoft.zqc0829</text><text x="2100" y="900" transform="rotate(-26.5 2100 900)">nhsoft.zqc0829</text><text x="2400" y="900" transform="rotate(-26.5 2400 900)">nhsoft.zqc0829</text></g></svg>
</body></html>
